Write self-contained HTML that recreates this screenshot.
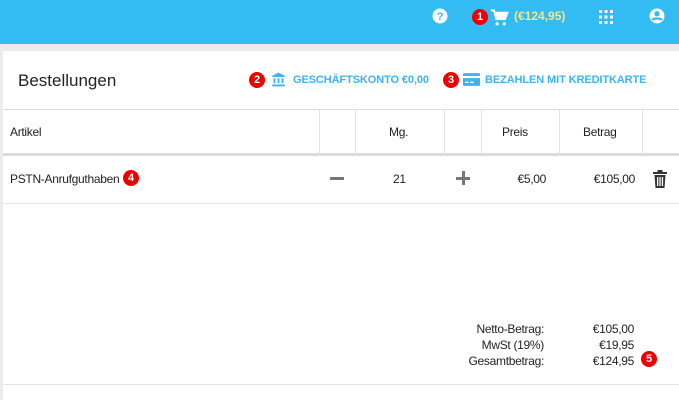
<!DOCTYPE html>
<html><head><style>
*{margin:0;padding:0;box-sizing:border-box}
body{width:679px;height:400px;background:#ececec;font-family:"Liberation Sans",sans-serif;position:relative;overflow:hidden;color:#222}
.a{position:absolute}
.top{left:0;top:0;width:679px;height:44px;background:#33bbf3}
.card{left:3px;top:51px;width:676px;height:349px;background:#fff}
.badge{position:absolute;width:16px;height:16px;border-radius:50%;background:#e00;color:#fff;font-size:11px;font-weight:bold;text-align:center;line-height:16px}
.link{color:#3db4ee;font-size:11px;font-weight:bold;letter-spacing:-0.1px}
.vl{position:absolute;top:110px;height:44px;width:1px;background:#e4e4e4}
.t{position:absolute;font-size:12px;letter-spacing:-0.3px}
.r{text-align:right}
</style></head><body>
<div class="a top"></div>
<svg class="a" style="left:431px;top:7px" width="18" height="18" viewBox="0 0 24 24"><circle cx="12" cy="12" r="10" fill="#fff"/><text x="12" y="17.5" font-size="15" font-weight="bold" text-anchor="middle" fill="#33bbf3" font-family="Liberation Sans">?</text></svg>
<div class="badge" style="left:472px;top:9px">1</div>
<svg class="a" style="left:490px;top:8px" width="19" height="19" viewBox="0 0 24 24"><path d="M1 3h4l3 11h11l3-8H7" fill="none" stroke="#fff" stroke-width="2.5"/><path d="M7 6h15l-3 8H9z" fill="#fff"/><circle cx="9" cy="20" r="2" fill="#fff"/><circle cx="18" cy="20" r="2" fill="#fff"/></svg>
<div class="a" style="left:514px;top:9px;color:#f7e58a;font-size:12px;font-weight:bold">(€124,95)</div>
<svg class="a" style="left:599px;top:10px" width="14" height="14" viewBox="0 0 14 14" fill="#fff"><rect x="0" y="0" width="3" height="3"/><rect x="5.5" y="0" width="3" height="3"/><rect x="11" y="0" width="3" height="3"/><rect x="0" y="5.5" width="3" height="3"/><rect x="5.5" y="5.5" width="3" height="3"/><rect x="11" y="5.5" width="3" height="3"/><rect x="0" y="11" width="3" height="3"/><rect x="5.5" y="11" width="3" height="3"/><rect x="11" y="11" width="3" height="3"/></svg>
<svg class="a" style="left:648px;top:7px" width="18" height="18" viewBox="0 0 24 24"><circle cx="12" cy="12" r="10" fill="#fff"/><circle cx="12" cy="9" r="3.5" fill="#33bbf3"/><path d="M5.5 17.5c2-3 11-3 13 0" stroke="#33bbf3" stroke-width="3" fill="none"/></svg>

<div class="a card"></div>
<div class="t" style="left:18px;top:71px;font-size:17px;color:#222;letter-spacing:0">Bestellungen</div>
<div class="badge" style="left:249px;top:72px">2</div>
<svg class="a" style="left:271px;top:72px" width="15" height="15" viewBox="0 0 24 24" fill="#3db4ee"><path d="M12 1L2 6v2h20V6z"/><rect x="4" y="10" width="3" height="8"/><rect x="10.5" y="10" width="3" height="8"/><rect x="17" y="10" width="3" height="8"/><rect x="2" y="20" width="20" height="3"/></svg>
<div class="a link" style="left:293px;top:74px">GESCHÄFTSKONTO €0,00</div>
<div class="badge" style="left:443px;top:72px">3</div>
<svg class="a" style="left:463px;top:72px" width="17" height="15" viewBox="0 0 24 20" fill="#3db4ee"><rect x="0" y="1" width="24" height="18" rx="2"/><rect x="0" y="5" width="24" height="3" fill="#fff"/><rect x="3" y="13" width="5" height="2" fill="#fff"/><rect x="10" y="13" width="5" height="2" fill="#fff"/></svg>
<div class="a link" style="left:485px;top:74px">BEZAHLEN MIT KREDITKARTE</div>

<div class="a" style="left:3px;top:109px;width:676px;height:1px;background:#ddd"></div>
<div class="vl" style="left:319px"></div><div class="vl" style="left:355px"></div><div class="vl" style="left:444px"></div><div class="vl" style="left:481px"></div><div class="vl" style="left:559px"></div><div class="vl" style="left:642px"></div>
<div class="t" style="left:10px;top:125px">Artikel</div>
<div class="t" style="left:389px;top:125px">Mg.</div>
<div class="t" style="left:502px;top:125px">Preis</div>
<div class="t" style="left:583px;top:125px">Betrag</div>
<div class="a" style="left:3px;top:153px;width:676px;height:3px;background:#dcdcdc"></div>

<div class="t" style="left:10px;top:172px">PSTN-Anrufguthaben</div>
<div class="badge" style="left:123px;top:170px">4</div>
<div class="a" style="left:330px;top:177px;width:14px;height:3px;background:#777"></div>
<div class="t" style="left:393px;top:172px">21</div>
<div class="a" style="left:456px;top:177px;width:14px;height:3px;background:#777"></div>
<div class="a" style="left:461.5px;top:171px;width:3px;height:14px;background:#777"></div>
<div class="t r" style="left:500px;top:172px;width:46px">€5,00</div>
<div class="t r" style="left:570px;top:172px;width:65px">€105,00</div>
<svg class="a" style="left:653px;top:170px" width="14" height="18" viewBox="0 0 14 18" fill="#333"><rect x="0" y="2" width="14" height="2"/><rect x="4.5" y="0" width="5" height="2"/><path d="M1.5 5h11l-1 13h-9z"/><rect x="4" y="7" width="1.3" height="9" fill="#fff"/><rect x="6.4" y="7" width="1.3" height="9" fill="#fff"/><rect x="8.8" y="7" width="1.3" height="9" fill="#fff"/></svg>
<div class="a" style="left:3px;top:203px;width:676px;height:1px;background:#e6e6e6"></div>

<div class="t r" style="left:440px;top:321px;width:104px;line-height:16px">Netto-Betrag:<br>MwSt (19%)<br>Gesamtbetrag:</div>
<div class="t r" style="left:570px;top:321px;width:64px;line-height:16px">€105,00<br>€19,95<br>€124,95</div>
<div class="badge" style="left:641px;top:351px">5</div>
<div class="a" style="left:3px;top:384px;width:676px;height:1px;background:#e6e6e6"></div>
</body></html>
